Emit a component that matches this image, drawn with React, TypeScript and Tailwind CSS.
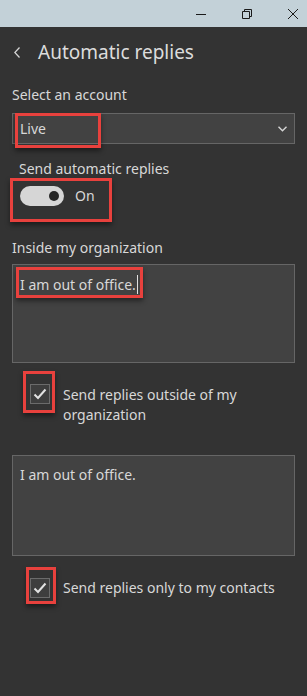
import React from "react";

const RedBox = ({ className }: { className: string }) => (
  <div
    className={`pointer-events-none absolute border-[3px] border-[#e8413d] shadow-[0_3px_5px_rgba(0,0,0,0.45)] ${className}`}
  />
);

const Check = () => (
  <div className="flex h-[20px] w-[20px] shrink-0 items-center justify-center border border-[#6b6b6b] bg-[#3e3e3e]">
    <svg width="14" height="12" viewBox="0 0 14 12" fill="none">
      <path d="M1.5 6.5 L5 10 L12.5 1.5" stroke="#e2e2e2" strokeWidth="2" />
    </svg>
  </div>
);

export default function App() {
  return (
    <div
      className="flex h-[696px] w-[307px] flex-col overflow-hidden bg-[#333333] text-[#d8d8d8]"
      style={{ fontFamily: '"Segoe UI", "Noto Sans", "Open Sans", sans-serif' }}
    >
      {/* Title bar */}
      <div className="flex h-[27px] shrink-0 items-center overflow-hidden bg-[#c3d1d8] pl-[178px]">
        <div className="flex h-full w-[46px] shrink-0 items-center justify-center">
          <svg width="10" height="10" viewBox="0 0 10 10">
            <path d="M0 5.5 H10" stroke="#1a1a1a" strokeWidth="1" />
          </svg>
        </div>
        <div className="flex h-full w-[46px] shrink-0 items-center justify-center">
          <svg width="10" height="10" viewBox="0 0 10 10" fill="none">
            <path d="M0.5 2.5 H7.5 V9.5 H0.5 Z" stroke="#1a1a1a" strokeWidth="1" />
            <path d="M2.5 2.5 V0.5 H9.5 V7.5 H7.5" stroke="#1a1a1a" strokeWidth="1" />
          </svg>
        </div>
        <div className="flex h-full w-[46px] shrink-0 items-center justify-center">
          <svg width="10" height="10" viewBox="0 0 10 10" fill="none">
            <path d="M0 0 L10 10 M10 0 L0 10" stroke="#1a1a1a" strokeWidth="1" />
          </svg>
        </div>
      </div>

      {/* Header */}
      <div className="flex h-[50px] shrink-0 items-center pl-[14px]">
        <svg width="6" height="11" viewBox="0 0 6 11" fill="none">
          <path d="M5.5 0.5 L0.8 5.5 L5.5 10.5" stroke="#d6d6d6" strokeWidth="1.3" />
        </svg>
        <span className="ml-[18px] text-[19px] leading-none text-[#dcdcdc]">Automatic replies</span>
      </div>

      <div className="flex flex-col px-[12px]">
        <div className="mt-[8px] text-[14px] leading-[20px]">Select an account</div>

        <div className="relative mt-[8px]">
          <div className="flex h-[31px] items-center justify-between border border-[#666666] bg-[#424242] pl-[7px] pr-[7px]">
            <span className="text-[14px] leading-[20px]">Live</span>
            <svg width="9" height="6" viewBox="0 0 9 6" fill="none">
              <path d="M0.5 0.8 L4.5 4.8 L8.5 0.8" stroke="#d6d6d6" strokeWidth="1.4" />
            </svg>
          </div>
          <RedBox className="left-[3px] top-[0px] h-[35px] w-[86px]" />
        </div>

        <div className="mt-[15px] pl-[7px] text-[14px] leading-[20px]">Send automatic replies</div>

        <div className="relative mt-[7px] flex items-center pl-[8px]">
          <div className="relative h-[20px] w-[44px] rounded-full bg-[#d6d6d6]">
            <div className="absolute right-[5px] top-[5px] h-[10px] w-[10px] rounded-full bg-[#262626]" />
          </div>
          <span className="ml-[11px] text-[14px] leading-[20px]">On</span>
          <RedBox className="-left-[2px] -top-[8px] h-[44px] w-[102px]" />
        </div>

        <div className="mt-[32px] text-[14px] leading-[20px]">Inside my organization</div>

        <div className="relative mt-[6px]">
          <div className="h-[99px] border border-[#666666] bg-[#424242] px-[7px] pt-[6px]">
            <span className="text-[14px] leading-[20px]">I am out of office.</span>
            <span className="ml-[1px] inline-block h-[19px] w-[1px] translate-y-[4px] bg-[#e0e0e0]" />
          </div>
          <RedBox className="left-[4px] top-[3px] h-[31px] w-[127px]" />
        </div>

        <div className="relative mt-[21px] flex items-start pl-[18px]">
          <Check />
          <span className="ml-[13px] mt-[1px] text-[14px] leading-[20px]">
            Send replies outside of my
            <br />
            organization
          </span>
          <RedBox className="left-[11px] -top-[13px] h-[42px] w-[32px]" />
        </div>

        <div className="mt-[30px] h-[101px] border border-[#666666] bg-[#424242] px-[7px] pt-[6px]">
          <span className="text-[14px] leading-[20px]">I am out of office.</span>
        </div>

        <div className="relative mt-[21px] flex items-center pl-[18px]">
          <Check />
          <span className="ml-[13px] mt-[1px] text-[14px] leading-[20px]">Send replies only to my contacts</span>
          <RedBox className="left-[14px] -top-[10px] h-[37px] w-[30px]" />
        </div>
      </div>
    </div>
  );
}
